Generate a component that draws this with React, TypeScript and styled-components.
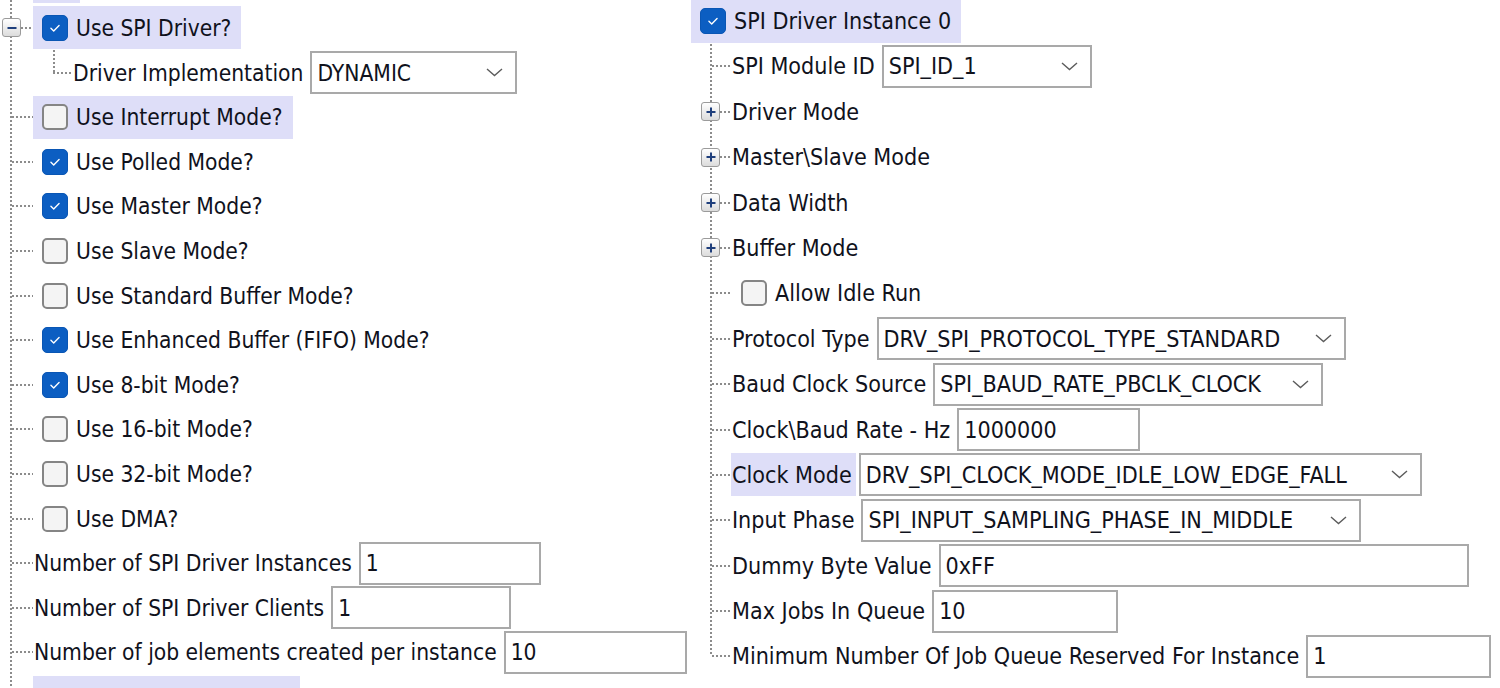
import React from 'react';
import styled, { createGlobalStyle, css } from 'styled-components';

const HL = '#dedef8';
const DOT = '#8c8c8c';
const INK = '#10121c';

const Global = createGlobalStyle`
  html, body { margin: 0; padding: 0; background: #fff; }
  body {
    font-family: "DejaVu Sans Condensed", "Liberation Sans", sans-serif;
    font-size: 22px;
    color: ${INK};
  }
  #root { width: 1500px; height: 688px; overflow: hidden; }
`;

const vDots = `repeating-linear-gradient(to bottom, ${DOT} 0 2px, transparent 2px 4px)`;
const hDots = `repeating-linear-gradient(to right, ${DOT} 0 2px, transparent 2px 4px)`;

const Screen = styled.main`
  display: grid;
  grid-template-columns: 691px 809px;
  width: 1500px;
  height: 688px;
  overflow: hidden;
  background: #fff;
`;

const Pane = styled.section<{ $fs: number }>`
  height: 688px;
  overflow: hidden;
  font-size: ${p => p.$fs}px;
`;

const Tree = styled.div<{ $trunk?: number; $shift?: number }>`
  display: flex;
  flex-direction: column;
  margin-top: ${p => p.$shift ?? 0}px;
  ${p => p.$trunk !== undefined && css`
    background: ${vDots} ${p.$trunk}px 0 / 2px 100% no-repeat;
  `}
`;

const Children = styled.div<{ $trunk: number; $tail: number }>`
  display: flex;
  flex-direction: column;
  background: ${vDots} ${p => p.$trunk}px 0 / 2px calc(100% - ${p => p.$tail}px) no-repeat;
`;

const Row = styled.div<{ $h: number }>`
  display: flex;
  align-items: center;
  height: ${p => p.$h}px;
  flex: none;
  white-space: nowrap;
`;

const Gutter = styled.div<{ $w: number }>`
  display: flex;
  align-self: stretch;
  width: ${p => p.$w}px;
  flex: none;
`;

const Stem = styled.div<{ $w: number; $pad?: number }>`
  display: flex;
  align-items: center;
  width: ${p => p.$w}px;
  padding-left: ${p => p.$pad ?? 0}px;
  box-sizing: border-box;
  flex: none;
`;

const Dash = styled.div`
  flex: 1;
  background: ${hDots} 0 50% / 100% 2px no-repeat;
`;

const Elbow = styled.div`
  width: 19px;
  flex: none;
  background:
    ${vDots} 0 0 / 2px 50% no-repeat,
    ${hDots} 0 50% / 100% 2px no-repeat;
`;

const Expander = styled.span`
  width: 19px;
  height: 19px;
  box-sizing: border-box;
  border: 1.5px solid #9b9b9b;
  border-radius: 3px;
  background: linear-gradient(to bottom, #ffffff, #dcdcdc);
  display: flex;
  align-items: center;
  justify-content: center;
  flex: none;
`;

const Label = styled.div<{ $hl?: boolean; $padL?: number; $padR?: number }>`
  display: flex;
  align-items: center;
  gap: 8px;
  height: 43px;
  box-sizing: border-box;
  padding: 0 ${p => p.$padR ?? 4}px 0 ${p => p.$padL ?? 1}px;
  background: ${p => (p.$hl ? HL : 'transparent')};
  flex: none;
`;

const Field = styled.div`
  display: flex;
  align-items: center;
  gap: 3px;
`;

const Box = styled.span<{ $on: boolean }>`
  width: 26px;
  height: 26px;
  box-sizing: border-box;
  border-radius: 5px;
  flex: none;
  display: flex;
  align-items: center;
  justify-content: center;
  ${p =>
    p.$on
      ? css`
          background: #0c5ec2;
          border: 1px solid #0a56b4;
        `
      : css`
          background: #f4f4f4;
          border: 2px solid #858585;
        `}
`;

const Edit = styled.div<{ $w: number }>`
  width: ${p => p.$w}px;
  height: 43px;
  box-sizing: border-box;
  border: 2px solid #a9a9a9;
  background: #fff;
  display: flex;
  align-items: center;
  justify-content: space-between;
  padding: 0 12px 0 5px;
  flex: none;
`;

const CutTop = styled.div`
  height: 5.7px;
  flex: none;
  padding-left: 33px;
`;

const CutBottom = styled.div`
  height: 14px;
  flex: none;
  padding: 1px 0 0 33px;
`;

const CutBar = styled.div<{ $w: number; $h: number }>`
  width: ${p => p.$w}px;
  height: ${p => p.$h}px;
  background: ${HL};
`;

const Check = ({ on }: { on: boolean }) => (
  <Box $on={on}>
    {on && (
      <svg width="26" height="26" viewBox="0 0 26 26">
        <path d="M8.6 13.2 L11.6 16.2 L17.4 10.4" fill="none" stroke="#fff" strokeWidth="1.5" strokeLinecap="round" strokeLinejoin="round" />
      </svg>
    )}
  </Box>
);

const PlusMinus = ({ plus }: { plus: boolean }) => (
  <Expander>
    <svg width="16" height="16" viewBox="0 0 16 16">
      <path d="M3.5 8 H12.5" stroke="#1f3f7c" strokeWidth="2" />
      {plus && <path d="M8 3.5 V12.5" stroke="#1f3f7c" strokeWidth="2" />}
    </svg>
  </Expander>
);

const Chevron = () => (
  <svg width="17" height="9" viewBox="0 0 17 9">
    <polyline points="1,1 8.5,7.5 16,1" fill="none" stroke="#5c5c5c" strokeWidth="1.4" />
  </svg>
);

type Node = {
  label: string;
  check?: boolean;
  hl?: boolean;
  exp?: 'plus' | 'minus';
  child?: boolean;
  combo?: string;
  edit?: string;
  w?: number;
};

const Content = ({ n, padCheck }: { n: Node; padCheck: number }) => {
  if (n.check !== undefined) {
    return (
      <Label $hl={n.hl} $padL={padCheck} $padR={10}>
        <Check on={n.check} />
        <span>{n.label}</span>
      </Label>
    );
  }
  if (n.combo !== undefined || n.edit !== undefined) {
    return (
      <Field>
        <Label $hl={n.hl}>{n.label}</Label>
        <Edit $w={n.w ?? 180}>
          <span>{n.combo ?? n.edit}</span>
          {n.combo !== undefined && <Chevron />}
        </Edit>
      </Field>
    );
  }
  return <Label $hl={n.hl}>{n.label}</Label>;
};

const left: Node[] = [
  { label: 'Use SPI Driver?', check: true, hl: true, exp: 'minus' },
  { label: 'Driver Implementation', child: true, combo: 'DYNAMIC', w: 207 },
  { label: 'Use Interrupt Mode?', check: false, hl: true },
  { label: 'Use Polled Mode?', check: true },
  { label: 'Use Master Mode?', check: true },
  { label: 'Use Slave Mode?', check: false },
  { label: 'Use Standard Buffer Mode?', check: false },
  { label: 'Use Enhanced Buffer (FIFO) Mode?', check: true },
  { label: 'Use 8-bit Mode?', check: true },
  { label: 'Use 16-bit Mode?', check: false },
  { label: 'Use 32-bit Mode?', check: false },
  { label: 'Use DMA?', check: false },
  { label: 'Number of SPI Driver Instances', edit: '1', w: 182 },
  { label: 'Number of SPI Driver Clients', edit: '1', w: 180 },
  { label: 'Number of job elements created per instance', edit: '10', w: 183 },
];

const right: Node[] = [
  { label: 'SPI Module ID', combo: 'SPI_ID_1', w: 210 },
  { label: 'Driver Mode', exp: 'plus' },
  { label: 'Master\\Slave Mode', exp: 'plus' },
  { label: 'Data Width', exp: 'plus' },
  { label: 'Buffer Mode', exp: 'plus' },
  { label: 'Allow Idle Run', check: false },
  { label: 'Protocol Type', combo: 'DRV_SPI_PROTOCOL_TYPE_STANDARD', w: 469 },
  { label: 'Baud Clock Source', combo: 'SPI_BAUD_RATE_PBCLK_CLOCK', w: 390 },
  { label: 'Clock\\Baud Rate - Hz', edit: '1000000', w: 183 },
  { label: 'Clock Mode', hl: true, combo: 'DRV_SPI_CLOCK_MODE_IDLE_LOW_EDGE_FALL', w: 563 },
  { label: 'Input Phase', combo: 'SPI_INPUT_SAMPLING_PHASE_IN_MIDDLE', w: 500 },
  { label: 'Dummy Byte Value', edit: '0xFF', w: 530 },
  { label: 'Max Jobs In Queue', edit: '10', w: 186 },
  { label: 'Minimum Number Of Job Queue Reserved For Instance', edit: '1', w: 185 },
];

const LH = 44.6;
const RH = 45.4;

export default function App() {
  return (
    <>
      <Global />
      <Screen>
        <Pane $fs={22.6}>
          <Tree $trunk={10}>
            <CutTop>
              <CutBar $w={47} $h={3} />
            </CutTop>
            {left.map(n => (
              <Row key={n.label} $h={LH}>
                {n.child ? (
                  <Gutter $w={72}>
                    <Stem $w={53} />
                    <Elbow />
                  </Gutter>
                ) : (
                  <Gutter $w={33}>
                    <Stem $w={n.exp ? 21 : 12} $pad={n.exp ? 2 : 0}>
                      {n.exp && <PlusMinus plus={n.exp === 'plus'} />}
                    </Stem>
                    <Dash />
                  </Gutter>
                )}
                <Content n={n} padCheck={9} />
              </Row>
            ))}
            <CutBottom>
              <CutBar $w={267} $h={13} />
            </CutBottom>
          </Tree>
        </Pane>
        <Pane $fs={23.1}>
          <Tree $shift={-1.7}>
            <Row $h={RH}>
              <Content n={{ label: 'SPI Driver Instance 0', check: true, hl: true }} padCheck={9} />
            </Row>
            <Children $trunk={19} $tail={RH / 2}>
              {right.map(n => (
                <Row key={n.label} $h={RH}>
                  <Gutter $w={40}>
                    <Stem $w={n.exp ? 29 : 21} $pad={n.exp ? 10 : 0}>
                      {n.exp && <PlusMinus plus />}
                    </Stem>
                    <Dash />
                  </Gutter>
                  <Content n={n} padCheck={10} />
                </Row>
              ))}
            </Children>
          </Tree>
        </Pane>
      </Screen>
    </>
  );
}
